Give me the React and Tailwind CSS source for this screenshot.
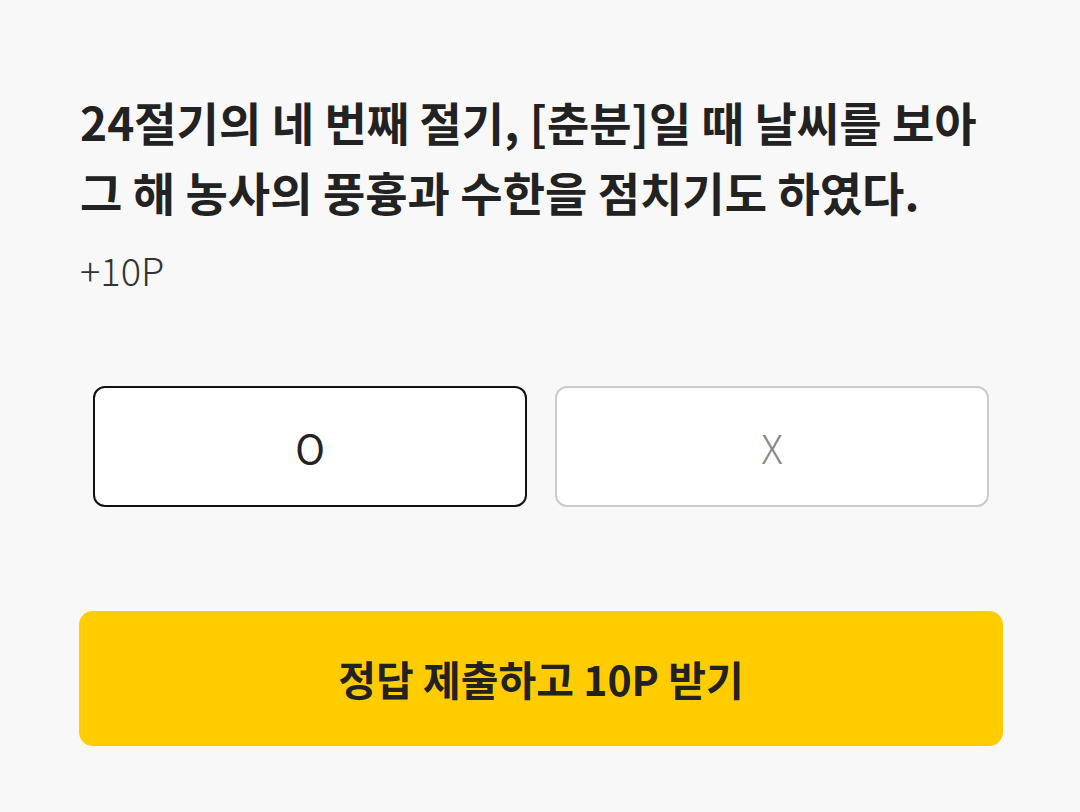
import { useState } from 'react';

const font = { fontFamily: '"Noto Sans CJK KR", "Noto Sans", sans-serif' };

const QuizPage = () => {
  const [answer, setAnswer] = useState('O');

  return (
    <div style={font} className="min-h-[812px] bg-[#f8f8f8] pl-[80px] pr-[78px] pt-[86px]">
      <h2 className="text-[46px] font-semibold leading-[70px] text-[#222]">
        24절기의 네 번째 절기, [춘분]일 때 날씨를 보아
        <br />
        그 해 농사의 풍흉과 수한을 점치기도 하였다.
      </h2>
      <p className="mt-[22px] text-[38px] font-light leading-[44px] text-[#333]">+10P</p>

      <div className="mt-[94px] grid grid-cols-2 gap-[28px] px-[13px]">
        <button
          onClick={() => setAnswer('O')}
          className={`h-[121px] rounded-[12px] bg-white text-[40px] ${
            answer === 'O' ? 'border-2 border-[#111] text-[#222]' : 'border-2 border-[#ccc] font-light text-[#888]'
          }`}
        >
          O
        </button>
        <button
          onClick={() => setAnswer('X')}
          className={`h-[121px] rounded-[12px] bg-white text-[40px] ${
            answer === 'X' ? 'border-2 border-[#111] text-[#222]' : 'border-2 border-[#ccc] font-light text-[#888]'
          }`}
        >
          X
        </button>
      </div>

      <button className="mt-[104px] -ml-px flex h-[135px] w-[calc(100%+2px)] items-center justify-center rounded-[14px] bg-[#ffcc00] text-[41px] font-semibold text-[#222]">
        정답 제출하고 10P 받기
      </button>
    </div>
  );
};

export default function App() {
  return <QuizPage />;
}
